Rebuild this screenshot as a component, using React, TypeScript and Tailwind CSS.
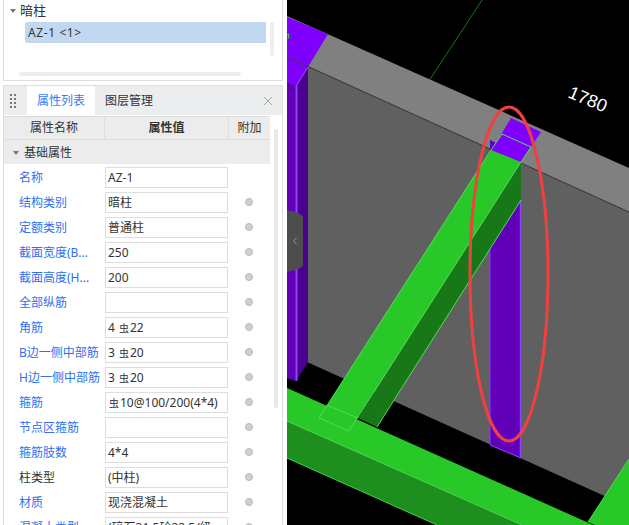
import { ChevronLeft, X } from 'lucide-react';
import type { ReactNode } from 'react';

const Bar = () => <span className="mx-[1px] align-[3px] text-[10px] leading-none">虫</span>;

interface Row {
  name: string;
  value: ReactNode;
  dark?: boolean;
  noDot?: boolean;
}

const rows: Row[] = [
  { name: '名称', value: 'AZ-1', noDot: true },
  { name: '结构类别', value: '暗柱' },
  { name: '定额类别', value: '普通柱' },
  { name: '截面宽度(B...', value: '250' },
  { name: '截面高度(H...', value: '200' },
  { name: '全部纵筋', value: '' },
  { name: '角筋', value: <>4 <Bar />22</> },
  { name: 'B边一侧中部筋', value: <>3 <Bar />20</> },
  { name: 'H边一侧中部筋', value: <>3 <Bar />20</> },
  { name: '箍筋', value: <><Bar />10@100/200(4*4)</> },
  { name: '节点区箍筋', value: '' },
  { name: '箍筋肢数', value: '4*4' },
  { name: '柱类型', value: '(中柱)', dark: true },
  { name: '材质', value: '现浇混凝土' },
  { name: '混凝土类型', value: '(碎石31.5砼32.5/级' },
];

function ModelView() {
  return (
    <svg viewBox="287 0 342 525" className="block h-[525px] w-[342px]">
      <rect x="287" y="0" width="342" height="525" fill="#000" />
      {/* construction line */}
      <line x1="482" y1="0" x2="429" y2="81" stroke="#0f7a0f" strokeWidth="1" />
      {/* wall */}
      <polygon points="287,16 629,168 629,212 287,57" fill="#808080" />
      <polygon points="287,57 629,212 629,507 287,353" fill="#606060" />
      <line x1="287" y1="57" x2="629" y2="212" stroke="#3a3a3a" strokeWidth="1" />
      {/* left column */}
      <polygon points="287,17 328,34 308,67 296,86 287,82" fill="#8000ff" />
      <polygon points="287,82 296,86 296,381 287,378" fill="#6000b8" />
      <polygon points="296,86 308,67 308,362 296,381" fill="#4b0090" />
      <line x1="296.5" y1="86" x2="296.5" y2="381" stroke="#9040ff" strokeWidth="2" />
      <line x1="287" y1="57" x2="308" y2="67" stroke="#3a3a3a" strokeWidth="1" />
      <line x1="296" y1="86" x2="308" y2="67" stroke="#a050ff" strokeWidth="1" />
      <polyline points="287,35 289,34 288,39" fill="none" stroke="#40d040" strokeWidth="1" />
      {/* centre column */}
      <polygon points="490,140 521,155 521,458 490,445" fill="#6000b8" />
      <line x1="490.5" y1="150" x2="490.5" y2="445" stroke="#7a20e0" strokeWidth="1" />
      <line x1="520.5" y1="160" x2="520.5" y2="458" stroke="#9040ff" strokeWidth="1.5" />
      <line x1="490" y1="445" x2="521" y2="458" stroke="#9040ff" strokeWidth="1" />
      <polygon points="521,162 521,200 377,427 358,418" fill="#187818" />
      <line x1="521" y1="200" x2="377" y2="427" stroke="#50e050" strokeWidth="1" />
      <polygon points="511,118 541,132 531,147 521,162 491,150 502,133" fill="#8000ff" />
      <line x1="502" y1="134" x2="531" y2="147" stroke="#50e050" strokeWidth="1" />
      <line x1="491" y1="150" x2="502" y2="134" stroke="#50e050" strokeWidth="1" />
      <line x1="521" y1="162" x2="531" y2="147" stroke="#50e050" strokeWidth="1" />
      {/* bottom beam */}
      <polygon points="287,388 629,541 629,572 287,421" fill="#28c828" />
      <polygon points="287,421 522,525 437,525 287,458" fill="#1e8e1e" />
      <line x1="287" y1="421" x2="522" y2="525" stroke="#50e050" strokeWidth="1" />
      <line x1="287" y1="458" x2="437" y2="525" stroke="#40d840" strokeWidth="1" />
      {/* diagonal beam */}
      <polygon points="491,150 521,162 349,431 319,418" fill="#28c828" />
      <line x1="521" y1="162" x2="349" y2="431" stroke="#50e050" strokeWidth="1" />
      <line x1="491" y1="150" x2="319" y2="418" stroke="#50e050" strokeWidth="1" />
      <line x1="319" y1="418" x2="349" y2="431" stroke="#50e050" strokeWidth="1" />
      <line x1="327" y1="405" x2="358" y2="418" stroke="#50e050" strokeWidth="1" />
      {/* right beam */}
      <polygon points="629,459 588,522 629,540" fill="#28c828" />
      <line x1="629" y1="459" x2="588" y2="522" stroke="#50e050" strokeWidth="1" />
      {/* dimension */}
      <text
        x="0"
        y="0"
        transform="translate(567 97) rotate(23)"
        fill="#fff"
        fontSize="18"
        fontFamily='"Liberation Sans", sans-serif'
      >
        1780
      </text>
      {/* annotation */}
      <ellipse cx="509" cy="274" rx="39" ry="167" fill="none" stroke="#f04040" strokeWidth="3" />
    </svg>
  );
}

export default function App() {
  return (
    <div
      className="flex h-[525px] w-[629px] overflow-hidden bg-white text-xs text-[#333]"
      style={{ fontFamily: '"Noto Sans", "Noto Sans CJK SC", sans-serif' }}
    >
      {/* Left panels */}
      <div className="flex w-[287px] shrink-0 flex-col pl-[3px] pr-[4px]">
        <div className="relative -mt-px h-[82px] shrink-0 border border-[#ddd] bg-white">
          <div className="flex h-[21px] items-center pl-[6px]">
            <span className="mr-[4px] h-0 w-0 border-x-[3px] border-t-[4px] border-x-transparent border-t-[#777]" />
            <span className="text-[13px] leading-none">暗柱</span>
          </div>
          <div className="ml-[21px] mt-[1px] flex h-[21px] w-[241px] items-center rounded-l-[2px] bg-[#c1d8f0] pl-[3px] text-[12px] tracking-[0.6px]">
            AZ-1 &lt;1&gt;
          </div>
          <div className="absolute left-[266px] top-[22px] h-[34px] w-[4px] rounded bg-[#eee]" />
          <div className="absolute left-[15px] top-[72px] h-[4px] w-[222px] rounded bg-[#eee]" />
        </div>

        <div className="relative mt-[4px] flex min-h-0 flex-1 flex-col border-x border-t border-[#ddd]">
          <div className="flex h-[29px] shrink-0 items-stretch bg-[#ecedef]">
            <div className="grid w-[23px] grid-cols-[2px_2px] content-center gap-[2px] pl-[6px]">
              {Array.from({ length: 8 }).map((_, i) => (
                <span key={i} className="h-[2px] w-[2px] bg-[#777]" />
              ))}
            </div>
            <div className="flex w-[68px] items-center justify-center bg-white text-[#2f7df6]">属性列表</div>
            <div className="ml-[10px] flex items-center text-[#333]">图层管理</div>
            <X className="ml-auto mr-[6px] self-center text-[#999]" size={16} strokeWidth={1.25} />
          </div>

          <div className="mt-[1px] w-[266px] shrink-0">
            <div className="flex h-[24px] border-y border-[#ddd] bg-[#ececec]">
              <div className="flex w-[101px] items-center justify-center border-r border-[#ddd]">属性名称</div>
              <div className="flex w-[124px] items-center justify-center border-r border-[#ddd] font-bold">属性值</div>
              <div className="flex flex-1 items-center justify-center">附加</div>
            </div>
            <div className="flex h-[24px] items-center bg-[#ececec] pl-[9px] pt-[2px]">
              <span className="mr-[5px] h-0 w-0 border-x-[3px] border-t-[4px] border-x-transparent border-t-[#777]" />
              基础属性
            </div>
            <div className="pt-[3px]">
              {rows.map((row) => (
                <div key={row.name} className="flex h-[25px] items-start">
                  <div
                    className={`w-[101px] shrink-0 truncate pl-[15px] pt-[2px] leading-[18px] ${
                      row.dark ? 'text-[#333]' : 'text-[#2f6ff0]'
                    }`}
                  >
                    {row.name}
                  </div>
                  <div className="flex h-[21px] w-[123px] shrink-0 items-center overflow-hidden whitespace-pre border border-[#ddd] bg-white pl-[2px] leading-none">
                    {row.value}
                  </div>
                  {!row.noDot && (
                    <span className="ml-[17px] mt-[6px] h-[8px] w-[8px] rounded-full border border-[#bbb] bg-[#d0d0d0]" />
                  )}
                </div>
              ))}
            </div>
          </div>
          <div className="absolute left-[270px] top-[43px] h-[279px] w-[4px] rounded bg-[#e8e8e8]" />
        </div>
      </div>

      {/* Model view */}
      <div className="relative flex-1">
        <ModelView />
        <div className="absolute left-0 top-[210px] flex h-[62px] w-[16px] items-center justify-center bg-[#4d4d4d] [clip-path:polygon(0_0,70%_3px,100%_6px,100%_56px,70%_59px,0_100%)]">
          <ChevronLeft className="text-[#aaa]" size={12} strokeWidth={1.5} />
        </div>
      </div>
    </div>
  );
}
